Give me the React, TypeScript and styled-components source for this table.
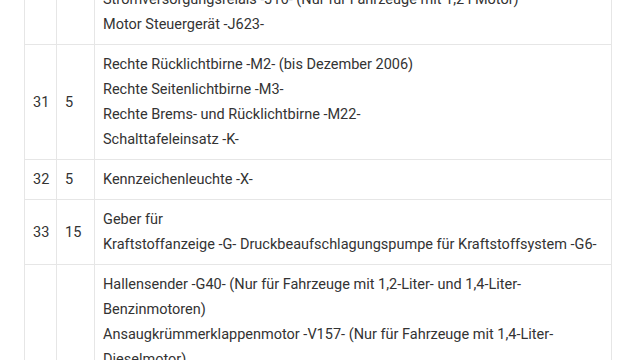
import styled, { createGlobalStyle } from "styled-components";

const GlobalStyle = createGlobalStyle`
  html, body {
    margin: 0;
    padding: 0;
    background: #ffffff;
    overflow: hidden;
  }
  body {
    font-family: Roboto, "Liberation Sans", Arial, sans-serif;
    color: #333333;
  }
`;

const Page = styled.div`
  height: 360px;
  overflow: hidden;
  padding: 0 28px 0 24px;
`;

const FuseTable = styled.table`
  width: 588px;
  margin-top: -121px;
  border-collapse: collapse;
  table-layout: fixed;
  font-size: 14.5px;
  line-height: 25px;
`;

const Cell = styled.td<{ $w?: number; $top?: boolean }>`
  box-sizing: border-box;
  border: 1px solid #e6e6e6;
  padding: 7px 6px 7px 8px;
  vertical-align: ${(p) => (p.$top ? "top" : "middle")};
  width: ${(p) => (p.$w ? `${p.$w}px` : "auto")};
  color: #333333;
`;

type Row = { nr: string; amp: string; parts: string[] };

const rows: Row[] = [
  {
    nr: "30",
    amp: "10",
    parts: [
      "Kraftstoffpumpenrelais -J17-",
      "Geber für Kühlmitteltemperatur -G62-",
      "Lambdasonde -G39-",
      "Magnetventil für Aktivkohlebehälter -N80-",
      "Stromversorgungsrelais -J16- (Nur für Fahrzeuge mit 1,2 l Motor)",
      "Motor Steuergerät -J623-",
    ],
  },
  {
    nr: "31",
    amp: "5",
    parts: [
      "Rechte Rücklichtbirne -M2- (bis Dezember 2006)",
      "Rechte Seitenlichtbirne -M3-",
      "Rechte Brems- und Rücklichtbirne -M22-",
      "Schalttafeleinsatz -K-",
    ],
  },
  { nr: "32", amp: "5", parts: ["Kennzeichenleuchte -X-"] },
  {
    nr: "33",
    amp: "15",
    parts: [
      "Geber für",
      "Kraftstoffanzeige -G- Druckbeaufschlagungspumpe für Kraftstoffsystem -G6-",
    ],
  },
  {
    nr: "34",
    amp: "10",
    parts: [
      "Hallensender -G40- (Nur für Fahrzeuge mit 1,2-Liter- und 1,4-Liter-Benzinmotoren)",
      "Ansaugkrümmerklappenmotor -V157- (Nur für Fahrzeuge mit 1,4-Liter-Dieselmotor)",
      "Ventil für Saugrohrumschaltung -N156-",
      "Magnetventil für Aktivkohlebehälter -N80-",
      "Lambdasonde -G39-",
      "Kühlmittelpumpe -V50-",
    ],
  },
];

function App() {
  return (
    <>
      <GlobalStyle />
      <Page>
        <FuseTable>
          <tbody>
            {rows.map((row) => (
              <tr key={row.nr}>
                <Cell $w={32}>{row.nr}</Cell>
                <Cell $w={38}>{row.amp}</Cell>
                <Cell $top>
                  {row.parts.map((part, i) => (
                    <span key={i}>
                      {part}
                      {i < row.parts.length - 1 && <br />}
                    </span>
                  ))}
                </Cell>
              </tr>
            ))}
          </tbody>
        </FuseTable>
      </Page>
    </>
  );
}

export default App;
